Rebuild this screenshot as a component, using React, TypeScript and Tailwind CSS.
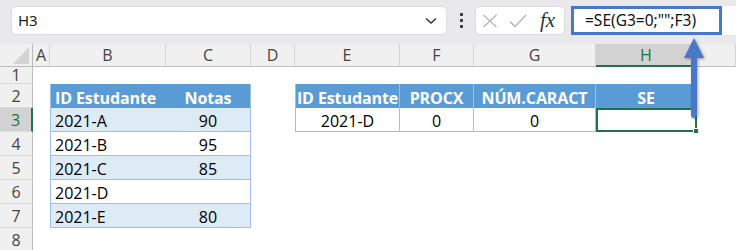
import React, { ReactNode } from "react";

const cellFont = { fontFamily: '"Open Sans", "Liberation Sans", sans-serif' };

function Cell({
  children,
  className,
}: {
  children?: ReactNode;
  className?: string;
}) {
  return (
    <div
      className={`flex h-full items-end overflow-visible whitespace-nowrap pb-[2px] text-[16px] leading-none text-black ${
        className ?? ""
      }`}
    >
      {children}
    </div>
  );
}

function RowHead({ n, active }: { n: number; active?: boolean }) {
  return (
    <div
      className={`flex h-full items-center justify-center border-b border-[#dadada] text-[16px] ${
        active
          ? "border-r-2 border-r-[#217346] bg-[#d2d2d2] text-[#217346]"
          : "border-r border-r-[#bcbcbc] bg-[#f0f0f0] text-[#444]"
      }`}
    >
      {n}
    </div>
  );
}

function ColHead({ label, active }: { label: string; active?: boolean }) {
  return (
    <div
      className={`flex h-full items-center justify-center border-r border-r-[#d5d5d5] text-[16px] ${
        active
          ? "border-b-2 border-b-[#217346] bg-[#d2d2d2] text-[#217346]"
          : "border-b border-b-[#bcbcbc] bg-[#f0f0f0] text-[#444]"
      }`}
    >
      {label}
    </div>
  );
}

const blue = "bg-[#5b9bd5] text-white font-bold text-[14px] tracking-[-0.1px]";
const stripe = "bg-[#ddebf7]";

function FormulaBar() {
  return (
    <div
      className="flex h-[44px] items-start bg-[#e9e9eb] pt-[6px] pl-[11px]"
      style={{ fontFamily: '"Noto Sans", "Open Sans", sans-serif' }}
    >
      <div className="flex h-[29px] w-[436px] items-center justify-between rounded-[5px] border border-[#dcdcdc] bg-white pl-[6px] pr-[9px] text-[15px] text-[#222]">
        <span>H3</span>
        <svg width="12" height="8" viewBox="0 0 12 8">
          <path d="M1 1.5 L6 6 L11 1.5" fill="none" stroke="#333" strokeWidth="1.4" />
        </svg>
      </div>
      <div className="flex h-[29px] w-[28px] flex-col items-center justify-center gap-[3px]">
        <span className="h-[3px] w-[3px] bg-[#444]" />
        <span className="h-[3px] w-[3px] bg-[#444]" />
        <span className="h-[3px] w-[3px] bg-[#444]" />
      </div>
      <div className="flex h-[29px] w-[90px] items-center rounded-[5px] border border-[#dcdcdc] bg-white pl-[6px]">
        <svg width="16" height="14" viewBox="0 0 16 14">
          <path d="M1.5 1 L14.5 13 M14.5 1 L1.5 13" stroke="#b4b4b4" strokeWidth="1.3" />
        </svg>
        <svg width="18" height="14" viewBox="0 0 18 14" className="ml-[11px]">
          <path d="M1 7.5 L6 12.5 L17 1" fill="none" stroke="#b4b4b4" strokeWidth="1.3" />
        </svg>
        <span
          className="ml-[13px] text-[21px] italic leading-none text-[#333]"
          style={{ fontFamily: '"Liberation Serif", "DejaVu Serif", serif' }}
        >
          fx
        </span>
      </div>
      <div className="ml-[6px] flex h-[29px] flex-1 bg-white">
        <div className="flex h-full w-[151px] items-center border-[3px] border-[#4a78c8] pl-[11px] text-[15.5px] text-[#111]">
          =SE(G3=0;"";F3)
        </div>
      </div>
    </div>
  );
}

export default function App() {
  const cols = ["A", "B", "C", "D", "E", "F", "G", "H", ""];
  return (
    <div
      className="relative h-[250px] w-[736px] overflow-hidden bg-white"
      style={cellFont}
    >
      <FormulaBar />
      <div className="grid grid-cols-[33px_17px_116px_85px_44px_105px_74px_122px_101px_39px] grid-rows-[23px_17px_repeat(7,24px)]">
        {/* column headers */}
        <div className="relative h-full border-r border-b border-[#bcbcbc] bg-[#f0f0f0]">
          <svg width="16" height="17" viewBox="0 0 16 17" className="absolute right-[3px] bottom-[2px]">
            <path d="M16 0 L16 17 L0 17 Z" fill="#d4d4d4" />
          </svg>
        </div>
        {cols.map((c, i) => (
          <ColHead key={i} label={c} active={c === "H"} />
        ))}

        {/* row 1 */}
        <RowHead n={1} />
        {Array.from({ length: 9 }).map((_, i) => (
          <div key={i} />
        ))}

        {/* row 2 */}
        <RowHead n={2} />
        <div />
        <Cell className={`${blue} border-l border-[#9bc2e6] pl-[4px]`}>ID Estudante</Cell>
        <Cell className={`${blue} justify-center border-r border-[#9bc2e6]`}>Notas</Cell>
        <div />
        <Cell className={`${blue} justify-center border-x border-[#9bc2e6]`}>ID Estudante</Cell>
        <Cell className={`${blue} justify-center border-r border-[#9bc2e6]`}>PROCX</Cell>
        <Cell className={`${blue} justify-center border-r border-[#9bc2e6]`}>NÚM.CARACT</Cell>
        <Cell className={`${blue} justify-center border-r border-[#9bc2e6]`}>SE</Cell>
        <div />

        {/* row 3 */}
        <RowHead n={3} active />
        <div />
        <Cell className={`${stripe} border-l border-b border-[#9bc2e6] pl-[4px]`}>2021-A</Cell>
        <Cell className={`${stripe} justify-center border-r border-b border-[#9bc2e6]`}>90</Cell>
        <div />
        <Cell className="justify-center border-x border-b border-[#9bc2e6]">2021-D</Cell>
        <Cell className="justify-center border-r border-b border-[#9bc2e6]">0</Cell>
        <Cell className="justify-center border-r border-b border-[#9bc2e6]">0</Cell>
        <div className="relative border-2 border-[#217346]">
          <span className="absolute -right-[4px] -bottom-[4px] h-[6px] w-[6px] border border-white bg-[#217346]" />
        </div>
        <div />

        {/* rows 4-7 */}
        {[
          ["2021-B", "95", ""],
          ["2021-C", "85", stripe],
          ["2021-D", "", ""],
          ["2021-E", "80", stripe],
        ].map(([id, nota, bg], r) => (
          <React.Fragment key={id}>
            <RowHead n={r + 4} />
            <div />
            <Cell className={`${bg} border-l border-b border-[#9bc2e6] pl-[4px]`}>{id}</Cell>
            <Cell className={`${bg} justify-center border-r border-b border-[#9bc2e6]`}>{nota}</Cell>
            {Array.from({ length: 6 }).map((_, i) => (
              <div key={i} />
            ))}
          </React.Fragment>
        ))}

        {/* row 8 */}
        <RowHead n={8} />
        {Array.from({ length: 9 }).map((_, i) => (
          <div key={i} />
        ))}
      </div>

      {/* callout arrow */}
      <svg
        width="40"
        height="100"
        viewBox="0 0 40 100"
        className="absolute left-[674px] top-[34px]"
        style={{ filter: "drop-shadow(1.5px 1.5px 1.5px rgba(0,0,0,0.35))" }}
      >
        <path d="M20 4 L30 24 L23 24 L23 81 Q23 84 20 84 Q17 84 17 81 L17 24 L10 24 Z" fill="#4a78c8" />
      </svg>
    </div>
  );
}
